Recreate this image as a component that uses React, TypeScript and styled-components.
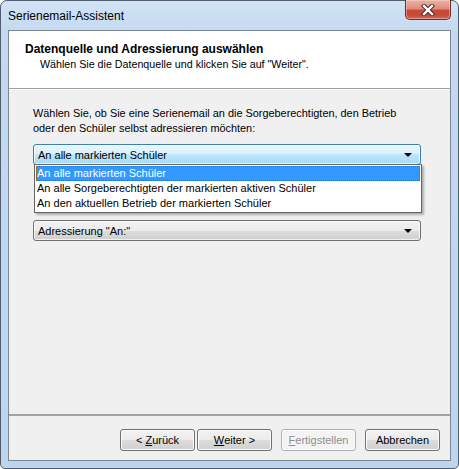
import React from 'react';
import styled, { createGlobalStyle } from 'styled-components';

const GlobalStyle = createGlobalStyle`
  html, body {
    margin: 0;
    padding: 0;
    background: #ffffff;
  }
  * {
    box-sizing: border-box;
  }
`;

const Window = styled.div`
  width: 459px;
  height: 469px;
  display: flex;
  flex-direction: column;
  padding: 0 7px 7px 7px;
  border: 1px solid #4f5d6d;
  border-radius: 7px 7px 5px 5px;
  background: linear-gradient(180deg, #d3e3f5 0px, #c4d9f0 30px, #bed5ee 100%);
  font-family: 'Liberation Sans', Arial, sans-serif;
  font-size: 11px;
  color: #000;
`;

const TitleBar = styled.div`
  height: 29px;
  display: flex;
  align-items: center;
  flex-shrink: 0;
`;

const Title = styled.span`
  font-size: 12px;
  color: #000;
  padding-top: 1px;
`;

const CloseButton = styled.div`
  margin-left: auto;
  align-self: flex-start;
  margin-top: -1px;
  width: 46px;
  height: 20px;
  display: flex;
  align-items: center;
  justify-content: center;
  border: 1px solid #6e2b24;
  border-top: none;
  border-radius: 0 0 5px 5px;
  background: linear-gradient(180deg, #eab2a6 0%, #de8d7c 45%, #c84a38 55%, #c44a36 80%, #d56c58 100%);
  box-shadow: inset 0 0 0 1px rgba(255, 220, 210, 0.45);
`;

const Client = styled.div`
  flex: 1;
  display: flex;
  flex-direction: column;
  border: 1px solid #7b8795;
  background: #f0f0f0;
`;

const Header = styled.div`
  height: 58px;
  flex-shrink: 0;
  background: #ffffff;
  border-bottom: 1px solid #a0a0a0;
  padding: 11px 16px 0 16px;
`;

const Heading = styled.div`
  font-weight: bold;
  font-size: 12px;
  line-height: 15px;
`;

const SubHeading = styled.div`
  font-size: 10.7px;
  line-height: 15px;
  padding-left: 15px;
`;

const Body = styled.div`
  flex: 1;
  display: flex;
  flex-direction: column;
  padding: 16px 29px 0 24px;
  border-top: 1px solid #ffffff;
`;

const Prompt = styled.div`
  line-height: 15px;
  font-size: 10.9px;
`;

const ComboWrap = styled.div<{ $top: number }>`
  position: relative;
  margin-top: ${(p) => p.$top}px;
`;

const Combo = styled.div<{ $active?: boolean }>`
  height: 21px;
  display: flex;
  align-items: center;
  padding: 0 8px 0 4px;
  border: 1px solid ${(p) => (p.$active ? '#3c7fb1' : '#707070')};
  border-radius: 3px;
  background: ${(p) =>
    p.$active
      ? 'linear-gradient(180deg, #eaf6fd 0%, #d9f0fc 50%, #bee6fd 50%, #a7d9f5 100%)'
      : 'linear-gradient(180deg, #f2f2f2 0%, #ebebeb 50%, #dddddd 50%, #cfcfcf 100%)'};
  box-shadow: inset 0 0 0 1px rgba(255, 255, 255, 0.7);
`;

const ComboText = styled.span`
  flex: 1;
  white-space: nowrap;
`;

const Arrow = styled.span`
  width: 0;
  height: 0;
  border-left: 4px solid transparent;
  border-right: 4px solid transparent;
  border-top: 4px solid #000;
`;

const DropList = styled.div`
  position: absolute;
  top: 20px;
  left: 1px;
  width: 388px;
  background: #ffffff;
  border: 1px solid #646464;
  padding: 1px;
  box-shadow: 2px 2px 2px rgba(0, 0, 0, 0.28);
  z-index: 2;
`;

const DropItem = styled.div<{ $selected?: boolean }>`
  height: 15px;
  line-height: 14px;
  padding-left: 1px;
  white-space: nowrap;
  background: ${(p) => (p.$selected ? '#3399ff' : 'transparent')};
  color: ${(p) => (p.$selected ? '#ffffff' : '#000000')};
  outline: ${(p) => (p.$selected ? '1px dotted #8a5a22' : 'none')};
  outline-offset: -1px;
`;

const Separator = styled.div`
  height: 2px;
  flex-shrink: 0;
  background: #a3a3a3;
`;

const Footer = styled.div`
  height: 44px;
  flex-shrink: 0;
  display: flex;
  justify-content: flex-end;
  align-items: flex-start;
  padding: 13px 10px 0 0;
`;

const Button = styled.div<{ $gap?: number; $disabled?: boolean }>`
  width: 75px;
  height: 22px;
  margin-left: ${(p) => p.$gap ?? 0}px;
  display: flex;
  align-items: center;
  justify-content: center;
  border: 1px solid ${(p) => (p.$disabled ? '#adb2b5' : '#707070')};
  border-radius: 3px;
  color: ${(p) => (p.$disabled ? '#8d8d8d' : '#000000')};
  background: ${(p) =>
    p.$disabled
      ? '#f4f4f4'
      : 'linear-gradient(180deg, #f2f2f2 0%, #ebebeb 50%, #dddddd 50%, #cfcfcf 100%)'};
  box-shadow: inset 0 0 0 1px #fbfbfb;
`;

const Key = styled.span`
  text-decoration: underline;
`;

const CloseIcon = () => (
  <svg width="14" height="12" viewBox="0 0 14 12">
    <path d="M3 2 L11 10 M11 2 L3 10" stroke="#4a2a26" strokeWidth="4.4" strokeLinecap="square" />
    <path d="M3 2 L11 10 M11 2 L3 10" stroke="#ffffff" strokeWidth="2.4" strokeLinecap="square" />
  </svg>
);

const App = () => {
  const options = [
    'An alle markierten Schüler',
    'An alle Sorgeberechtigten der markierten aktiven Schüler',
    'An den aktuellen Betrieb der markierten Schüler',
  ];

  return (
    <>
      <GlobalStyle />
      <Window>
        <TitleBar>
          <Title>Serienemail-Assistent</Title>
          <CloseButton>
            <CloseIcon />
          </CloseButton>
        </TitleBar>
        <Client>
          <Header>
            <Heading>Datenquelle und Adressierung auswählen</Heading>
            <SubHeading>Wählen Sie die Datenquelle und klicken Sie auf "Weiter".</SubHeading>
          </Header>
          <Body>
            <Prompt>
              Wählen Sie, ob Sie eine Serienemail an die Sorgeberechtigten, den Betrieb
              <br />
              oder den Schüler selbst adressieren möchten:
            </Prompt>
            <ComboWrap $top={8}>
              <Combo $active>
                <ComboText>{options[0]}</ComboText>
                <Arrow />
              </Combo>
              <DropList>
                {options.map((o, i) => (
                  <DropItem key={o} $selected={i === 0}>
                    {o}
                  </DropItem>
                ))}
              </DropList>
            </ComboWrap>
            <ComboWrap $top={55}>
              <Combo>
                <ComboText>Adressierung "An:"</ComboText>
                <Arrow />
              </Combo>
            </ComboWrap>
          </Body>
          <Separator />
          <Footer>
            <Button>
              &lt;&nbsp;<Key>Z</Key>urück
            </Button>
            <Button $gap={2}>
              <Key>W</Key>eiter &gt;
            </Button>
            <Button $gap={9} $disabled>
              <Key>F</Key>ertigstellen
            </Button>
            <Button $gap={9}>Abbrechen</Button>
          </Footer>
        </Client>
      </Window>
    </>
  );
};

export default App;
